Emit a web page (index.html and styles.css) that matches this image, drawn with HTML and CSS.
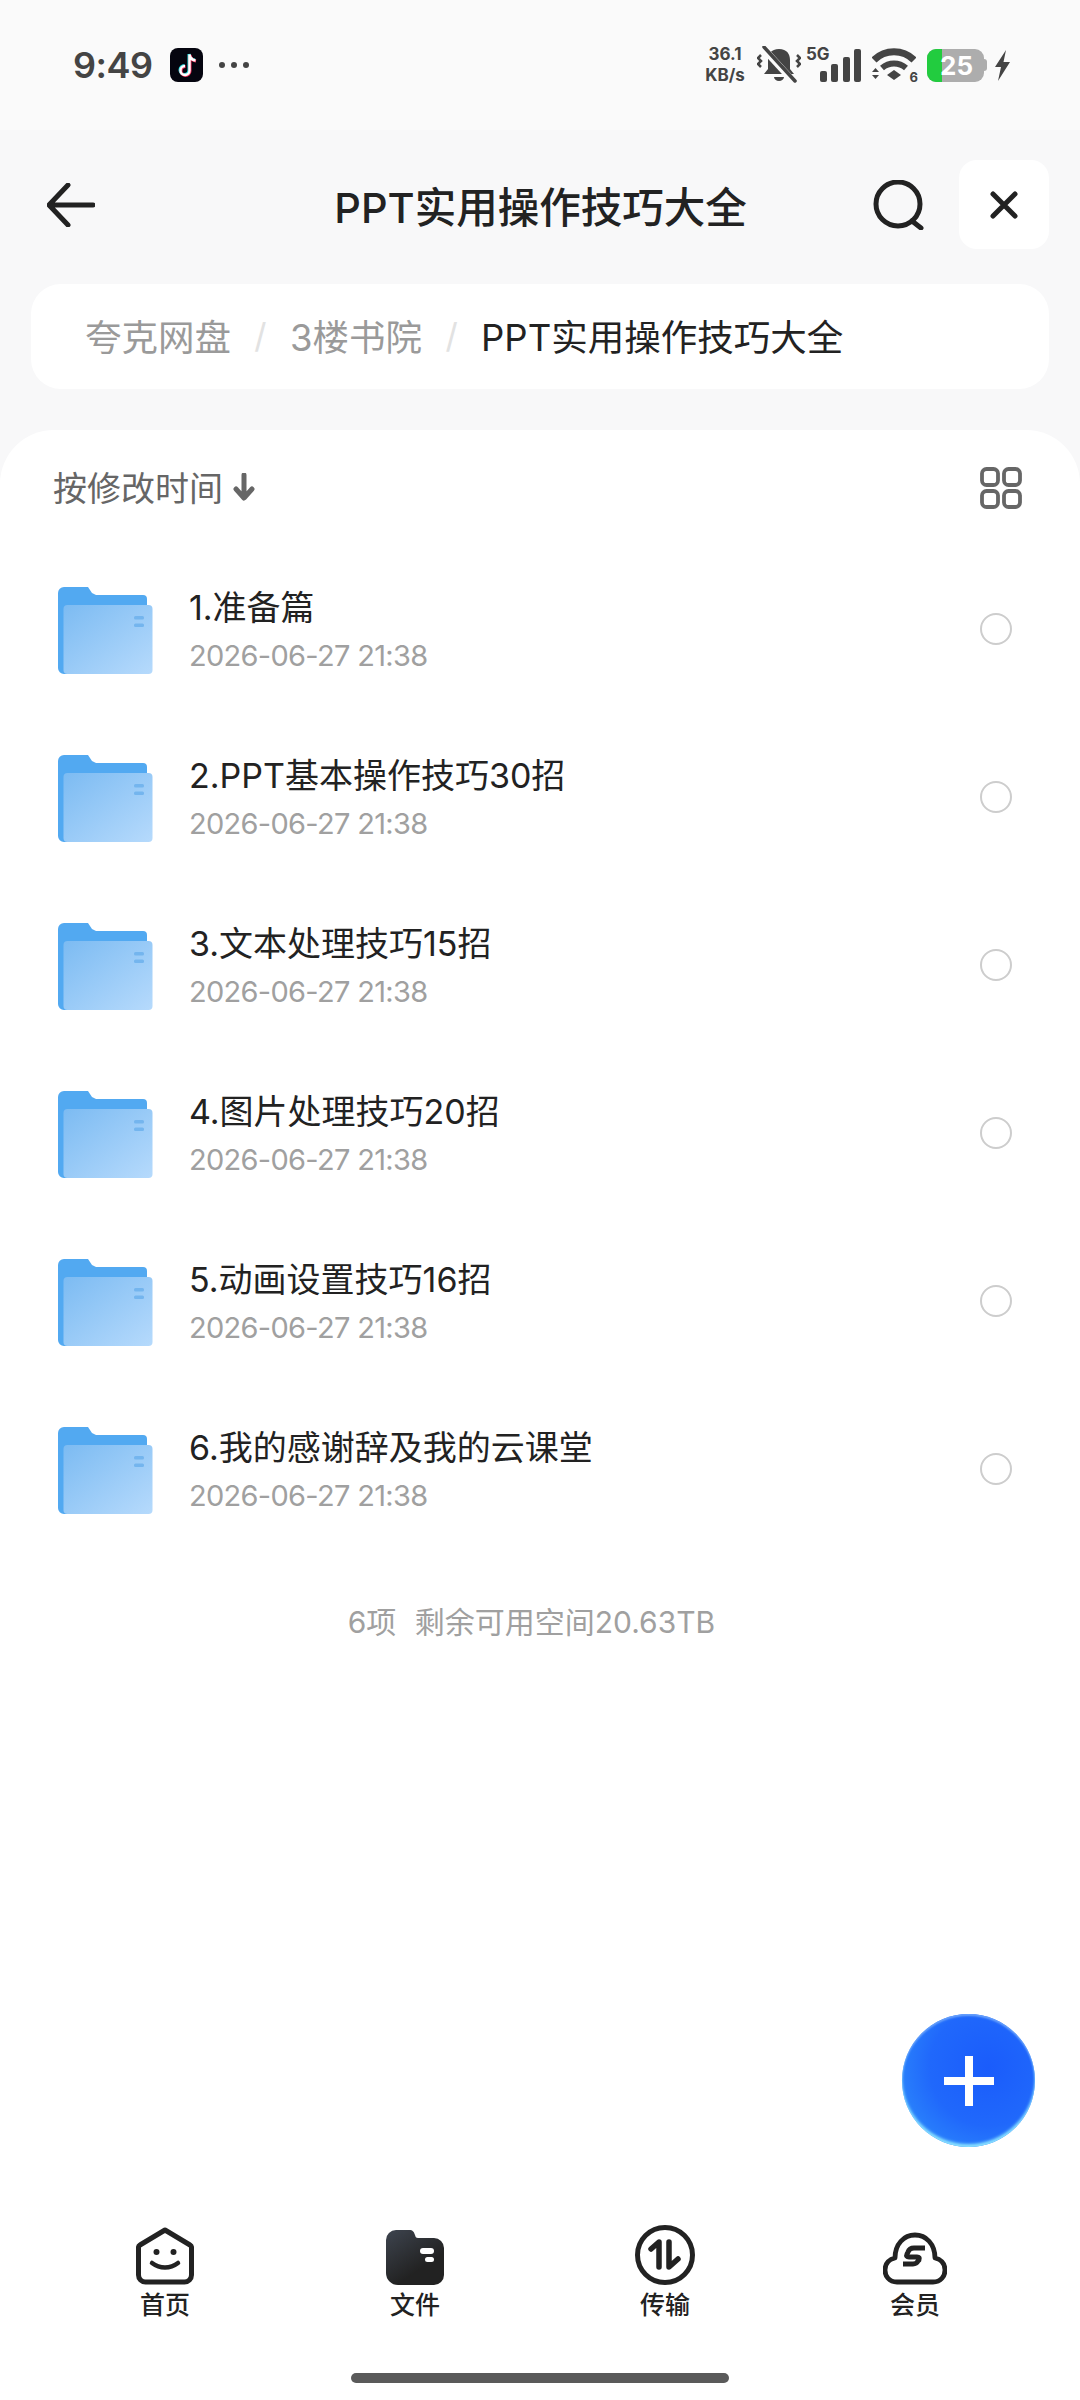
FILE: index.html
```html
<!DOCTYPE html>
<html lang="zh-CN">
<head>
  <meta charset="UTF-8">
  <title>PPT实用操作技巧大全</title>
  <link rel="stylesheet" href="styles.css">
</head>
<body>
  <svg class="defs">
    <defs>
      <linearGradient id="folderFront" x1="0" y1="0" x2="1" y2="1">
        <stop offset="0" stop-color="#7cbbf2"/>
        <stop offset="1" stop-color="#b6daFc"/>
      </linearGradient>
      <linearGradient id="navFolder" x1="0.1" y1="0" x2="0.6" y2="0.7">
        <stop offset="0" stop-color="#3c424c"/>
        <stop offset="1" stop-color="#222222"/>
      </linearGradient>
      <symbol id="folder" viewBox="0 0 95 87">
        <path d="M0 6a6 6 0 0 1 6-6h24l4 6 4 2h47a4 4 0 0 1 4 4v71a4 4 0 0 1-4 4H6a6 6 0 0 1-6-6z" fill="#52a9f1"/>
        <rect x="5.500" y="18" width="89" height="69" rx="4" fill="url(#folderFront)"/>
        <rect x="76" y="29" width="10" height="3.500" rx="1.500" fill="#74b5ee"/>
        <rect x="76" y="36.500" width="10" height="3.500" rx="1.500" fill="#74b5ee"/>
      </symbol>
    </defs>
  </svg>

  <div class="status-bar">
    <div class="status-left">
      <span class="clock">9:49</span>
      <svg class="tiktok" width="33" height="34" viewBox="0 0 33 34">
        <rect width="33" height="34" rx="8" fill="#05050f"/>
        <path d="M19 6v16a4.500 4.500 0 1 1-4.500-4.500M19 6c.5 3.500 3 5.500 6 6" fill="none" stroke="#25e5e8" stroke-width="3"/>
        <path d="M20 7v16a4.500 4.500 0 1 1-4.500-4.500M20 7c.5 3.500 3 5.500 6 6" fill="none" stroke="#f5305c" stroke-width="3"/>
        <path d="M19.500 6.500v16a4.500 4.500 0 1 1-4.500-4.500M19.500 6.500c.5 3.500 3 5.500 6 6" fill="none" stroke="#fff" stroke-width="2.400"/>
      </svg>
      <span class="status-dots"><i></i><i></i><i></i></span>
    </div>
    <div class="status-right">
      <span class="net-speed">36.1<br>KB/s</span>
      <svg width="44" height="38" viewBox="0 0 44 38" class="ic-bell">
        <path d="M22 3c-8 0-11 5-11 11v9l-4 5h30l-4-5v-9c0-6-3-11-11-11z" fill="#444"/>
        <path d="M17 31h10a5 4 0 0 1-10 0z" fill="#444"/>
        <path d="M5 1l31 34" stroke="#fafafa" stroke-width="7"/>
        <path d="M7 1l31 34" stroke="#444" stroke-width="3.500" stroke-linecap="round"/>
        <path d="M4 9L1 12l3 3-3 3 3 3M40 9l3 3-3 3 3 3-3 3" fill="none" stroke="#444" stroke-width="2.500"/>
      </svg>
      <div class="signal">
        <span class="net-type">5G</span>
        <svg width="41" height="33" viewBox="0 0 41 33">
          <rect x="0" y="22" width="7" height="11" rx="2" fill="#444"/>
          <rect x="11" y="15" width="7" height="18" rx="2" fill="#444"/>
          <rect x="23" y="8" width="7" height="25" rx="2" fill="#444"/>
          <rect x="34" y="0" width="7" height="33" rx="2" fill="#444"/>
        </svg>
      </div>
      <div class="wifi">
        <svg width="44" height="33" viewBox="0 0 44 33">
          <path d="M2 12c11-11 29-11 40 0" fill="none" stroke="#444" stroke-width="7"/>
          <path d="M10 20c7-6 17-6 24 0" fill="none" stroke="#444" stroke-width="6"/>
          <path d="M15 27l7-5 7 5-7 5z" fill="#444"/>
          <path d="M0 24l3.500-4 3.500 4zM0 27l3.500 4 3.500-4z" fill="#444"/>
        </svg>
        <span class="wifi-gen">6</span>
      </div>
      <div class="battery">
        <div class="battery-body">
          <div class="battery-fill"></div>
          <span class="battery-level">25</span>
        </div>
        <span class="battery-cap"></span>
      </div>
      <svg width="15" height="31" viewBox="0 0 15 31">
        <path d="M11 0L0 17h6l-3 14L15 12H8.500z" fill="#444"/>
      </svg>
    </div>
  </div>

  <header class="app-header">
    <svg class="back" width="48" height="44" viewBox="0 0 48 44">
      <path d="M46 22H3M21 2L2 22l19 20" fill="none" stroke="#222" stroke-width="5" stroke-linecap="round" stroke-linejoin="round"/>
    </svg>
    <h1 class="app-title">PPT实用操作技巧大全</h1>
    <div class="header-actions">
      <svg class="search" width="52" height="50" viewBox="0 0 52 50">
        <circle cx="25" cy="24" r="22" fill="none" stroke="#222" stroke-width="5"/>
        <path d="M39 41l9 7" fill="none" stroke="#222" stroke-width="5" stroke-linecap="round"/>
      </svg>
      <div class="close-btn">
        <svg width="28" height="28" viewBox="0 0 28 28">
          <path d="M3 3l22 22M25 3L3 25" fill="none" stroke="#222" stroke-width="5" stroke-linecap="round"/>
        </svg>
      </div>
    </div>
  </header>

  <nav class="crumbs">
    <span class="crumb">夸克网盘</span>
    <span class="crumb-sep">/</span>
    <span class="crumb">3楼书院</span>
    <span class="crumb-sep">/</span>
    <span class="crumb crumb-current">PPT实用操作技巧大全</span>
  </nav>

  <main class="sheet">
    <div class="sort-bar">
      <div class="sort-label">
        按修改时间
        <svg width="24" height="28" viewBox="0 0 24 28">
          <path d="M12 2v20M4 16l8 9 8-9" fill="none" stroke="#666" stroke-width="5" stroke-linecap="round" stroke-linejoin="round"/>
        </svg>
      </div>
      <svg width="42" height="42" viewBox="0 0 42 42">
        <g fill="none" stroke="#666" stroke-width="3.800">
          <rect x="2" y="2" width="16" height="16" rx="4.500"/>
          <rect x="24" y="2" width="16" height="16" rx="4.500"/>
          <rect x="2" y="24" width="16" height="16" rx="4.500"/>
          <rect x="24" y="24" width="16" height="16" rx="4.500"/>
        </g>
      </svg>
    </div>

    <ul class="file-list">
      <li class="file-row">
        <svg class="file-icon"><use href="#folder"/></svg>
        <div class="file-info">
          <div class="file-name">1.准备篇</div>
          <div class="file-date">2026-06-27 21:38</div>
        </div>
        <span class="radio"></span>
      </li>
      <li class="file-row">
        <svg class="file-icon"><use href="#folder"/></svg>
        <div class="file-info">
          <div class="file-name">2.PPT基本操作技巧30招</div>
          <div class="file-date">2026-06-27 21:38</div>
        </div>
        <span class="radio"></span>
      </li>
      <li class="file-row">
        <svg class="file-icon"><use href="#folder"/></svg>
        <div class="file-info">
          <div class="file-name">3.文本处理技巧15招</div>
          <div class="file-date">2026-06-27 21:38</div>
        </div>
        <span class="radio"></span>
      </li>
      <li class="file-row">
        <svg class="file-icon"><use href="#folder"/></svg>
        <div class="file-info">
          <div class="file-name">4.图片处理技巧20招</div>
          <div class="file-date">2026-06-27 21:38</div>
        </div>
        <span class="radio"></span>
      </li>
      <li class="file-row">
        <svg class="file-icon"><use href="#folder"/></svg>
        <div class="file-info">
          <div class="file-name">5.动画设置技巧16招</div>
          <div class="file-date">2026-06-27 21:38</div>
        </div>
        <span class="radio"></span>
      </li>
      <li class="file-row">
        <svg class="file-icon"><use href="#folder"/></svg>
        <div class="file-info">
          <div class="file-name">6.我的感谢辞及我的云课堂</div>
          <div class="file-date">2026-06-27 21:38</div>
        </div>
        <span class="radio"></span>
      </li>
    </ul>

    <div class="list-footer">6项 剩余可用空间20.63TB</div>

    <button class="fab">
      <svg width="50" height="50" viewBox="0 0 50 50">
        <path d="M25 0v50M0 25h50" stroke="#fff" stroke-width="8"/>
      </svg>
    </button>

    <footer class="tab-bar">
      <div class="tab">
        <svg width="58" height="58" viewBox="0 0 58 58">
          <path d="M29 3L4 18a3 3 0 0 0-1.500 3v27a7 7 0 0 0 7 7h39a7 7 0 0 0 7-7V21a3 3 0 0 0-1.500-3z" fill="none" stroke="#222" stroke-width="5" stroke-linejoin="round"/>
          <circle cx="20.500" cy="25" r="3" fill="#222"/>
          <circle cx="37.500" cy="25" r="3" fill="#222"/>
          <path d="M16 36c8 6 18 6 26 0" fill="none" stroke="#222" stroke-width="4.500" stroke-linecap="round"/>
        </svg>
        <span class="tab-label">首页</span>
      </div>
      <div class="tab">
        <svg width="58" height="58" viewBox="0 0 58 58">
          <path d="M0 13a10 10 0 0 1 10-10h13c4 0 5 2 6 5 .500 2 1 3 3 3h16a10 10 0 0 1 10 10v27a10 10 0 0 1-10 10H12a12 12 0 0 1-12-12z" fill="url(#navFolder)"/>
          <rect x="34" y="21" width="14" height="6" rx="3" fill="#fff"/>
          <rect x="39" y="30" width="9" height="5" rx="2.500" fill="#fff"/>
        </svg>
        <span class="tab-label">文件</span>
      </div>
      <div class="tab">
        <svg width="60" height="60" viewBox="0 0 60 60">
          <circle cx="30" cy="30" r="27.500" fill="none" stroke="#222" stroke-width="5"/>
          <path d="M24 42V17l-8 7" fill="none" stroke="#222" stroke-width="5.500" stroke-linecap="round" stroke-linejoin="round"/>
          <path d="M34 17v25l9-8" fill="none" stroke="#222" stroke-width="5.500" stroke-linecap="round" stroke-linejoin="round"/>
        </svg>
        <span class="tab-label">传输</span>
      </div>
      <div class="tab">
        <svg width="64" height="54" viewBox="0 0 64 54">
          <path d="M14 51C6 51 2 45 2 39c0-7 5-11 10-12 0-14 9-23 20-23s20 9 20 23c5 1 10 5 10 12 0 6-4 12-12 12z" fill="none" stroke="#222" stroke-width="4.800" stroke-linejoin="round"/>
          <path d="M42 17H31c-3 0-5 1-6 4l-1 2c-1 2 0 3 2 3h8c2 0 3 1 2 3l-1 1c-1 2-2 3-5 3H20" fill="none" stroke="#222" stroke-width="5"/>
        </svg>
        <span class="tab-label">会员</span>
      </div>
    </footer>

    <div class="home-indicator"></div>
  </main>
</body>
</html>
```

FILE: styles.css
```css
* {
  box-sizing: border-box;
}
body {
  margin: 0;
  width: 1080px;
  height: 2400px;
  display: flex;
  flex-direction: column;
  background: #f8f8f9;
  font-family: Inter, "Noto Sans CJK SC", sans-serif;
  color: #222;
  overflow: hidden;
}
.defs {
  position: absolute;
  width: 0;
  height: 0;
}

/* status bar */
.status-bar {
  height: 130px;
  padding: 48px 70px 0 73px;
  display: flex;
  justify-content: space-between;
  align-items: flex-start;
  background: #fafafa;
  flex-shrink: 0;
}
.status-left {
  display: flex;
  align-items: center;
  height: 34px;
}
.clock {
  font-size: 36px;
  font-weight: 600;
  color: #444;
  letter-spacing: -0.5px;
}
.tiktok {
  margin-left: 17px;
}
.status-dots {
  display: flex;
  gap: 6px;
  margin-left: 16px;
}
.status-dots i {
  width: 6px;
  height: 6px;
  border-radius: 50%;
  background: #444;
}
.status-right {
  display: flex;
  align-items: center;
  height: 34px;
}
.net-speed {
  font-size: 17px;
  line-height: 21px;
  font-weight: 700;
  color: #444;
  text-align: center;
  width: 44px;
}
.ic-bell {
  margin-left: 10px;
}
.signal {
  display: flex;
  align-items: flex-end;
  height: 34px;
  margin-left: 5px;
  position: relative;
  padding-left: 14px;
}
.net-type {
  position: absolute;
  left: 0;
  top: -4px;
  font-size: 17px;
  font-weight: 700;
  color: #444;
}
.wifi {
  position: relative;
  margin-left: 11px;
  height: 34px;
}
.wifi-gen {
  position: absolute;
  right: -2px;
  bottom: -3px;
  font-size: 13px;
  font-weight: 700;
  color: #444;
}
.battery {
  display: flex;
  align-items: center;
  margin: 0 8px 0 11px;
}
.battery-body {
  position: relative;
  width: 57px;
  height: 33px;
  border-radius: 9px;
  background: #adadad;
  overflow: hidden;
}
.battery-fill {
  width: 15px;
  height: 100%;
  background: #22cc3f;
}
.battery-level {
  position: absolute;
  left: 13px;
  top: 0;
  font-size: 26px;
  line-height: 33px;
  font-weight: 700;
  color: #fff;
}
.battery-cap {
  width: 3px;
  height: 12px;
  border-radius: 0 3px 3px 0;
  background: #adadad;
}

/* header */
.app-header {
  height: 89px;
  margin: 30px 31px 0 32px;
  display: grid;
  grid-template-columns: 1fr auto 1fr;
  align-items: center;
  flex-shrink: 0;
}
.back {
  margin-left: 15px;
}
.app-title {
  margin: 0;
  font-size: 41.500px;
  font-weight: 500;
  color: #222;
  white-space: nowrap;
}
.header-actions {
  display: flex;
  align-items: center;
  justify-content: flex-end;
}
.search {
  margin-right: 34px;
}
.close-btn {
  width: 90px;
  height: 89px;
  border-radius: 18px;
  background: #fff;
  display: flex;
  align-items: center;
  justify-content: center;
}

/* breadcrumb */
.crumbs {
  height: 105px;
  margin: 35px 31px 0 31px;
  padding: 0 0 3px 54px;
  display: flex;
  align-items: center;
  border-radius: 30px;
  background: #fff;
  font-size: 36.500px;
  flex-shrink: 0;
}
.crumb {
  color: #9a9a9a;
}
.crumb-current {
  color: #222;
}
.crumb-sep {
  width: 59px;
  text-align: center;
  color: #e2e2e2;
  font-size: 34px;
}

/* file sheet */
.sheet {
  position: relative;
  flex: 1;
  margin-top: 41px;
  display: flex;
  flex-direction: column;
  border-radius: 54px 54px 0 0;
  background: #fff;
}
.sort-bar {
  height: 115px;
  padding: 0 58px 0 53px;
  display: flex;
  align-items: center;
  justify-content: space-between;
  flex-shrink: 0;
}
.sort-label {
  display: flex;
  align-items: center;
  gap: 9px;
  padding-bottom: 2px;
  font-size: 34px;
  color: #666;
}
.file-list {
  list-style: none;
  margin: 0;
  padding: 0;
}
.file-row {
  height: 168px;
  padding: 0 68px 0 58px;
  display: flex;
  align-items: center;
}
.file-icon {
  width: 95px;
  height: 87px;
  margin-top: 2px;
  flex-shrink: 0;
}
.file-info {
  flex: 1;
  margin-left: 36px;
  padding-top: 3px;
}
.file-name {
  font-size: 34px;
  line-height: 48px;
  color: #222;
}
.file-date {
  margin-top: 2px;
  font-size: 29px;
  line-height: 44px;
  letter-spacing: -0.7px;
  color: #a0a0a0;
}
.radio {
  width: 32px;
  height: 32px;
  border: 2px solid #cdcdcd;
  border-radius: 50%;
  flex-shrink: 0;
}
.list-footer {
  height: 134px;
  padding-right: 17px;
  display: flex;
  align-items: center;
  justify-content: center;
  font-size: 30px;
  word-spacing: 10px;
  color: #a0a0a0;
}

/* floating add button */
.fab {
  position: absolute;
  left: 902px;
  top: 1584px;
  width: 133px;
  height: 133px;
  padding: 0;
  border: none;
  border-radius: 50%;
  display: flex;
  align-items: center;
  justify-content: center;
  background: radial-gradient(circle at 65% 40%, #1a5cfb 0%, #2068fb 50%, #2b85fb 82%, #36aefc 100%);
  box-shadow: inset 0 -3px 3px #8ae2ff, inset 0 2px 2px #6aa2fb;
}

/* bottom tabs */
.tab-bar {
  margin-top: auto;
  padding: 0 40px;
  display: grid;
  grid-template-columns: repeat(4, 250px);
}
.tab {
  height: 118px;
  display: flex;
  flex-direction: column;
  align-items: center;
  justify-content: flex-end;
}
.tab-label {
  margin-top: 3px;
  font-size: 25px;
  line-height: 35px;
  font-weight: 500;
  color: #222;
}
.home-indicator {
  width: 378px;
  height: 10px;
  margin: 50px 0 17px 351px;
  border-radius: 5px;
  background: #5a5a5a;
  flex-shrink: 0;
}
```
